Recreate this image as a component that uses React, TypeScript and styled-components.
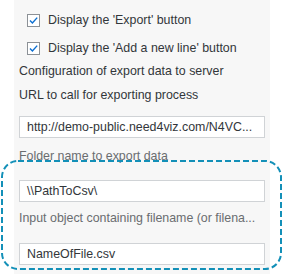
import React from "react";
import styled, { createGlobalStyle } from "styled-components";

const Global = createGlobalStyle`
  html, body { margin: 0; padding: 0; background: #ffffff; }
  body { font-family: "Liberation Sans", Arial, sans-serif; }
`;

const Page = styled.div`
  position: relative;
  width: 283px;
  height: 274px;
  overflow: hidden;
  background: #ffffff;
`;

const Panel = styled.div`
  margin-left: 14px;
  width: 256px;
  height: 274px;
  background: #f7f7f7;
  box-sizing: border-box;
  padding: 8px 5px 0 5px;
  display: flex;
  flex-direction: column;
`;

const CheckRow = styled.div<{ $top: number }>`
  display: flex;
  align-items: center;
  height: 24px;
  margin-top: ${(p) => p.$top}px;
  padding-left: 8px;
  gap: 8px;
  font-size: 12.4px;
  color: #32363a;
`;

const Box = styled.span`
  width: 11px;
  height: 11px;
  border: 1px solid #8c9196;
  background: #ffffff;
  display: flex;
  align-items: center;
  justify-content: center;
`;

const Label = styled.div<{ $top: number; $muted?: boolean }>`
  height: 22px;
  line-height: 22px;
  margin-top: ${(p) => p.$top}px;
  font-size: 12.4px;
  color: ${(p) => (p.$muted ? "#6a6d70" : "#32363a")};
  white-space: nowrap;
`;

const Input = styled.div<{ $top: number }>`
  height: 22px;
  line-height: 20px;
  margin-top: ${(p) => p.$top}px;
  border: 1px solid #d0d3d6;
  background: #ffffff;
  box-sizing: border-box;
  padding: 0 7px;
  font-size: 12.4px;
  color: #32363a;
  white-space: nowrap;
`;

const Highlight = styled.svg`
  position: absolute;
  left: 0;
  top: 159px;
  pointer-events: none;
`;

const Check = () => (
  <svg width="11" height="11" viewBox="0 0 11 11">
    <path d="M2 5.6 L4.4 8 L9.2 2.6" fill="none" stroke="#0a6ed1" strokeWidth="1.4" />
  </svg>
);

export default function App() {
  return (
    <Page>
      <Global />
      <Panel>
        <CheckRow $top={0}>
          <Box><Check /></Box>
          Display the 'Export' button
        </CheckRow>
        <CheckRow $top={4}>
          <Box><Check /></Box>
          Display the 'Add a new line' button
        </CheckRow>
        <Label $top={0}>Configuration of export data to server</Label>
        <Label $top={2}>URL to call for exporting process</Label>
        <Input $top={10}>http://demo-public.need4viz.com/N4VC...</Input>
        <Label $top={7} $muted>Folder name to export data</Label>
        <Input $top={13}>\\PathToCsv\</Input>
        <Label $top={5} $muted>Input object containing filename (or filena...</Label>
        <Input $top={14}>NameOfFile.csv</Input>
      </Panel>
      <Highlight width="283" height="113" viewBox="0 0 283 113">
        <rect x="2" y="2" width="279" height="108" rx="16" fill="none" stroke="#1390b8" strokeWidth="2" strokeDasharray="6 3" />
      </Highlight>
    </Page>
  );
}
